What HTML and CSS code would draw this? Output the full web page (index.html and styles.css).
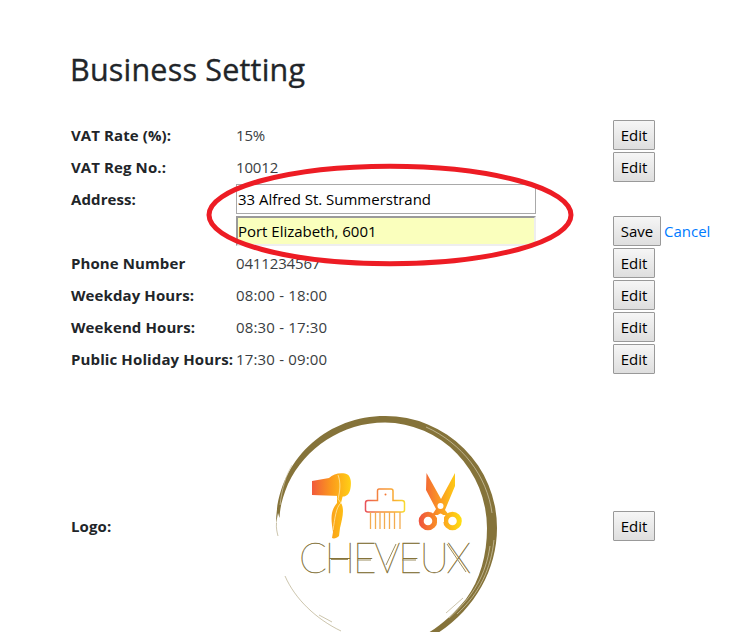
FILE: index.html
```html
<!DOCTYPE html>
<html lang="en">
<head>
<meta charset="utf-8">
<title>Business Setting</title>
<link rel="stylesheet" href="styles.css">
</head>
<body>
<main class="page">
  <h1 class="title"><span>Business Setting</span></h1>
  <div class="settings">
    <div class="label"><span>VAT Rate (%):</span></div><div class="value">15%</div><div class="action"><button class="btn">Edit</button></div>
    <div class="label"><span>VAT Reg No.:</span></div><div class="value">10012</div><div class="action"><button class="btn">Edit</button></div>
    <div class="label"><span>Address:</span></div><div class="value"><input class="field" type="text" value="33 Alfred St. Summerstrand"></div><div class="action"></div>
    <div class="label"></div><div class="value"><input class="field field-filled" type="text" value="Port Elizabeth, 6001"></div><div class="action"><button class="btn btn-save">Save</button><a class="cancel">Cancel</a></div>
    <div class="label"><span>Phone Number</span></div><div class="value">0411234567</div><div class="action"><button class="btn">Edit</button></div>
    <div class="label"><span>Weekday Hours:</span></div><div class="value hours">08:00 - 18:00</div><div class="action"><button class="btn">Edit</button></div>
    <div class="label"><span>Weekend Hours:</span></div><div class="value hours">08:30 - 17:30</div><div class="action"><button class="btn">Edit</button></div>
    <div class="label label-long"><span>Public Holiday Hours:</span></div><div class="value hours">17:30 - 09:00</div><div class="action"><button class="btn">Edit</button></div>
    <div class="label"><span>Logo:</span></div>
    <div class="value">
      <svg class="logo" viewBox="236 376 300 300" width="300" height="300">
        <defs>
          <linearGradient id="dryer" x1="0" x2="1"><stop offset="0" stop-color="#f15a3c"/><stop offset=".5" stop-color="#fb9a1c"/><stop offset="1" stop-color="#ffd015"/></linearGradient>
          <linearGradient id="handle" x1="0" x2="1"><stop offset="0" stop-color="#fba21a"/><stop offset="1" stop-color="#fdbd14"/></linearGradient>
          <linearGradient id="comb" gradientUnits="userSpaceOnUse" x1="365" y1="0" x2="406" y2="0"><stop offset="0" stop-color="#e8505a"/><stop offset=".35" stop-color="#f58a3c"/><stop offset=".7" stop-color="#f9aa32"/><stop offset="1" stop-color="#f8e030"/></linearGradient>
          <linearGradient id="scissors" gradientUnits="userSpaceOnUse" x1="418" y1="0" x2="462" y2="0"><stop offset="0" stop-color="#ee4f3f"/><stop offset=".5" stop-color="#fb9a22"/><stop offset="1" stop-color="#ffe010"/></linearGradient>
        </defs>
        <g class="ring">
          <path d="M276 524C276 463 324 416 385 416A111.500 112 0 0 1 497 528C497 572 472 613 433 636L420 637C436 630 452 616 466 599C480 580 487 555 487 528A103 106 0 0 0 385 422.500C342 422.500 305 448 288 484C283 496 280 506 279.500 518L278 513Z"/>
          <path class="hair" d="M276.500 523C276 528 277 532 278 536M285 576C295 599 316 619 341 631M319 615L332 622M446 613L463 598"/>
          <path class="streak" d="M426 427C462 443 487 476 492 513M494 540C491 568 480 593 457 614M490 546C486 574 474 596 449 618M280 505C282 488 286 475 292 465"/>
        </g>
        <path fill="url(#dryer)" d="M312 481L329 478C333 474 339 472.500 345 473.500C351 474.500 351.500 482 350.500 488C349.500 495 345 498 340 496L312 495Z"/>
        <path fill="url(#handle)" d="M337 495H343L341 503C345 509 342 520 340 528L339 536C337 538 334 539 332 538L333 532C331 520 330 511 337 503Z"/>
        <path class="seam" d="M338 475C341 483 340 491 338 499L341 503C336 507 335 518 333 530"/>
        <path class="comb" d="M379 489H391Q393 489 393 491V500.500H402Q404.500 500.500 404.500 503V510Q404.500 512 402 512H368Q365.500 512 365.500 510V503Q365.500 500.500 368 500.500H377.500V491Q377.500 489 379 489Z"/>
        <circle cx="385.500" cy="494.500" r="1" fill="#f47834"/>
        <path class="teeth" d="M370.500 512V529M375.500 512V529M380 512V529M384.500 512V529M389.500 512V529M394.500 512V529M400 512V529"/>
        <g fill="url(#scissors)">
          <path d="M426.500 473L441 499L455 473V486L445 510L449 515H432L436 509L426 490Z"/>
        </g>
        <circle class="loop" cx="428" cy="521" r="6.800"/>
        <circle class="loop" cx="452.500" cy="521" r="6.800"/>
        <circle cx="440.500" cy="506" r="3" fill="#fff"/>
        <path fill="#fff" d="M437 516Q440.500 511 444 516V522H437Z"/>
        <text class="brand" x="299" y="572.500" textLength="172" lengthAdjust="spacing">CHEVEUX</text>
        <path class="accent" d="M331 559.500H348M357 560H371M402 560H416M386 565L396 544M447 544L466 572"/>
      </svg>
    </div>
    <div class="action"><button class="btn">Edit</button></div>
  </div>
  <svg class="highlight" viewBox="0 0 370 106" width="370" height="106"><ellipse cx="185" cy="53" rx="181" ry="48.800"/></svg>
</main>
</body>
</html>
```
FILE: styles.css
```css
* { box-sizing: border-box; }
html, body { margin: 0; height: 632px; overflow: hidden; background: #fff; }
body { color: #212529; font-family: "Open Sans", "Noto Sans", sans-serif; font-size: 15px; line-height: 24px; }
.page { position: relative; padding: 50px 0 0 70px; height: 632px; overflow: hidden; }
.title { margin: 0 0 32px; font-size: 30.500px; line-height: 38px; font-weight: 500; letter-spacing: .2px; white-space: nowrap; -webkit-text-stroke: .35px #212529; }
.settings { display: grid; grid-template-columns: 164px 375px 120px; grid-template-rows: repeat(8, 30px) 300px; gap: 2px; align-items: center; }
.label { padding-left: 1px; font-weight: 700; white-space: nowrap; letter-spacing: .1px; }
.label-long { letter-spacing: .12px; }
.value { height: 100%; display: flex; align-items: center; color: #3a3e42; font-weight: 400; letter-spacing: -.15px; }
.hours { letter-spacing: .17px; }
.action { display: flex; align-items: center; gap: 3px; }
.btn { width: 42px; height: 30px; padding: 0; border: 1px solid #999; border-radius: 1px; background: linear-gradient(#f6f6f6, #dedede); color: #000; font: inherit; letter-spacing: 0; }
.btn-save { width: 48px; }
.cancel { color: #007bff; }
.field { width: 300px; height: 30px; margin: 0; padding: 1px; border: 1px solid #a9a9a9; background: #fff; color: #000; font: inherit; font-weight: 400; letter-spacing: -.02px; outline: 0; }
.field-filled { padding: 0; border: 2px solid; border-color: #9a9a9a #eee #eee #9a9a9a; background: #faffbd; }
.logo { display: block; }
.ring { fill: #85733a; }
.hair, .streak { fill: none; stroke: #85733a; stroke-width: .7; }
.hair { opacity: .6; }
.streak { stroke: #d5cdb0; }
.seam { fill: none; stroke: #ffe9a8; stroke-width: .8; }
.comb { fill: none; stroke: url(#comb); stroke-width: 1.500; }
.teeth { fill: none; stroke: #f3ac50; stroke-width: 1.300; }
.loop { fill: none; stroke: url(#scissors); stroke-width: 5; }
.brand { font-family: Lato, sans-serif; font-size: 41px; font-weight: 100; fill: #85733a; stroke: #85733a; stroke-width: .4; }
.accent { fill: none; stroke: #9c8e61; stroke-width: 1; }
.highlight { position: absolute; left: 204.500px; top: 161.500px; overflow: visible; }
.highlight ellipse { fill: none; stroke: #ed1c24; stroke-width: 5; }
```
